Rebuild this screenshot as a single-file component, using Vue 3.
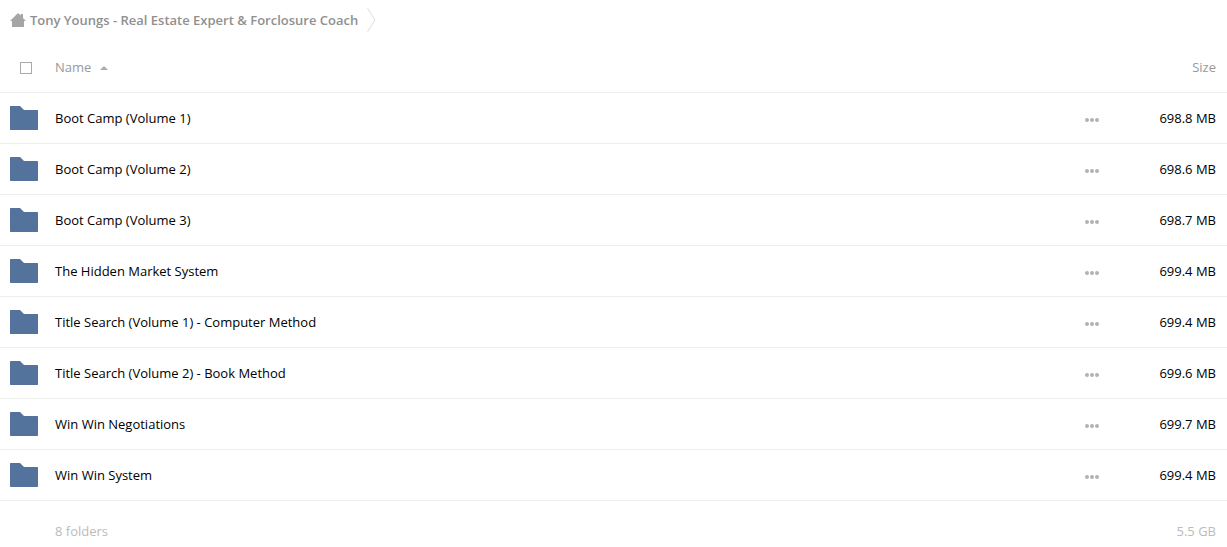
<script setup>
import { ref, computed } from 'vue'

const folders = [
  { name: 'Boot Camp (Volume 1)', size: '698.8 MB' },
  { name: 'Boot Camp (Volume 2)', size: '698.6 MB' },
  { name: 'Boot Camp (Volume 3)', size: '698.7 MB' },
  { name: 'The Hidden Market System', size: '699.4 MB' },
  { name: 'Title Search (Volume 1) - Computer Method', size: '699.4 MB' },
  { name: 'Title Search (Volume 2) - Book Method', size: '699.6 MB' },
  { name: 'Win Win Negotiations', size: '699.7 MB' },
  { name: 'Win Win System', size: '699.4 MB' },
]

const ascending = ref(true)
const selectAll = ref(false)
const rows = computed(() => (ascending.value ? folders : [...folders].reverse()))
</script>

<template>
  <main class="files">
    <nav class="breadcrumb" aria-label="Breadcrumb">
      <a class="crumb" href="#">
        <svg class="home" viewBox="0 0 16 14" aria-hidden="true">
          <path d="M8 0 L10.6 2.6 V1 H13 V5 L16 8 H14 V14 H2 V8 H0 Z" />
        </svg>
        <span>Tony Youngs - Real Estate Expert &amp; Forclosure Coach</span>
      </a>
      <svg class="separator" viewBox="0 0 9 24" aria-hidden="true">
        <path d="M0.5 0 L8 12 L0.5 24" />
      </svg>
    </nav>

    <table class="list">
      <thead>
        <tr>
          <th class="icon-cell">
            <input v-model="selectAll" class="check" type="checkbox" aria-label="Select all" />
          </th>
          <th class="name-cell">
            <button class="sort" type="button" @click="ascending = !ascending">
              <span>Name</span>
              <svg class="arrow" :class="{ down: !ascending }" viewBox="0 0 8 4" aria-hidden="true">
                <path d="M4 0 L8 4 H0 Z" />
              </svg>
            </button>
          </th>
          <th class="menu-cell"></th>
          <th class="size-cell">Size</th>
        </tr>
      </thead>
      <tbody>
        <tr v-for="folder in rows" :key="folder.name">
          <td class="icon-cell">
            <svg class="folder" viewBox="0 0 28 24" aria-hidden="true">
              <path d="M0.5 0 H10 L14 4 H27.5 L28 4.5 V23.5 L27.5 24 H0.5 L0 23.5 V0.5 Z" />
            </svg>
          </td>
          <td class="name-cell"><a href="#">{{ folder.name }}</a></td>
          <td class="menu-cell">
            <button class="more" type="button" :aria-label="'Actions for ' + folder.name">
              <svg viewBox="0 0 14 4" aria-hidden="true">
                <circle cx="2" cy="2" r="2" />
                <circle cx="7" cy="2" r="2" />
                <circle cx="12" cy="2" r="2" />
              </svg>
            </button>
          </td>
          <td class="size-cell">{{ folder.size }}</td>
        </tr>
      </tbody>
      <tfoot>
        <tr>
          <td class="icon-cell"></td>
          <td class="name-cell">8 folders</td>
          <td class="menu-cell"></td>
          <td class="size-cell">5.5 GB</td>
        </tr>
      </tfoot>
    </table>
  </main>
</template>

<style>
body {
  margin: 0;
  background: #fff;
}
</style>

<style scoped>
.files {
  font-family: "Open Sans", "Noto Sans", sans-serif;
  font-size: 13px;
  line-height: 20px;
  color: #000;
}

.files a {
  color: inherit;
  text-decoration: none;
}

.breadcrumb {
  display: flex;
  align-items: center;
  gap: 9px;
  height: 40px;
  padding: 0 10px;
  margin-bottom: 2px;
}

.crumb {
  display: flex;
  align-items: center;
  gap: 4px;
  font-weight: 600;
}

.breadcrumb .crumb {
  color: #909090;
}

.home {
  width: 16px;
  height: 14px;
  fill: #a6a6a6;
}

.separator {
  width: 9px;
  height: 24px;
  fill: none;
  stroke: #ddd;
}

.list {
  width: 100%;
  border-collapse: separate;
  border-spacing: 0;
  table-layout: fixed;
}

th,
td {
  height: 50px;
  padding: 0;
  border-bottom: 1px solid #eee;
  font-weight: 400;
  text-align: left;
  vertical-align: middle;
}

th {
  color: #999;
}

.icon-cell {
  width: 45px;
  padding-left: 10px;
}

.menu-cell {
  width: 40px;
}

.size-cell {
  width: 104px;
  padding-right: 11px;
  text-align: right;
}

.check {
  display: block;
  appearance: none;
  box-sizing: border-box;
  width: 12px;
  height: 12px;
  margin: 2px 0 0 10px;
  border: 1px solid #aaa;
  background: #fff;
}

.check:checked {
  background: #aaa;
}

.sort {
  display: flex;
  align-items: center;
  gap: 9px;
  padding: 0;
  border: 0;
  background: none;
  color: inherit;
  font: inherit;
}

.arrow {
  width: 8px;
  height: 4px;
  margin-top: 2px;
  fill: #aaa;
}

.arrow.down {
  transform: rotate(180deg);
}

.folder {
  display: block;
  width: 28px;
  height: 24px;
  fill: #54739c;
}

.more {
  display: block;
  padding: 12px 13px 9px;
  border: 0;
  background: none;
}

.more svg {
  display: block;
  width: 14px;
  height: 4px;
  fill: #b2b2b2;
}

tfoot td {
  height: 60px;
  border-bottom: 0;
  color: #bbb;
}
</style>
